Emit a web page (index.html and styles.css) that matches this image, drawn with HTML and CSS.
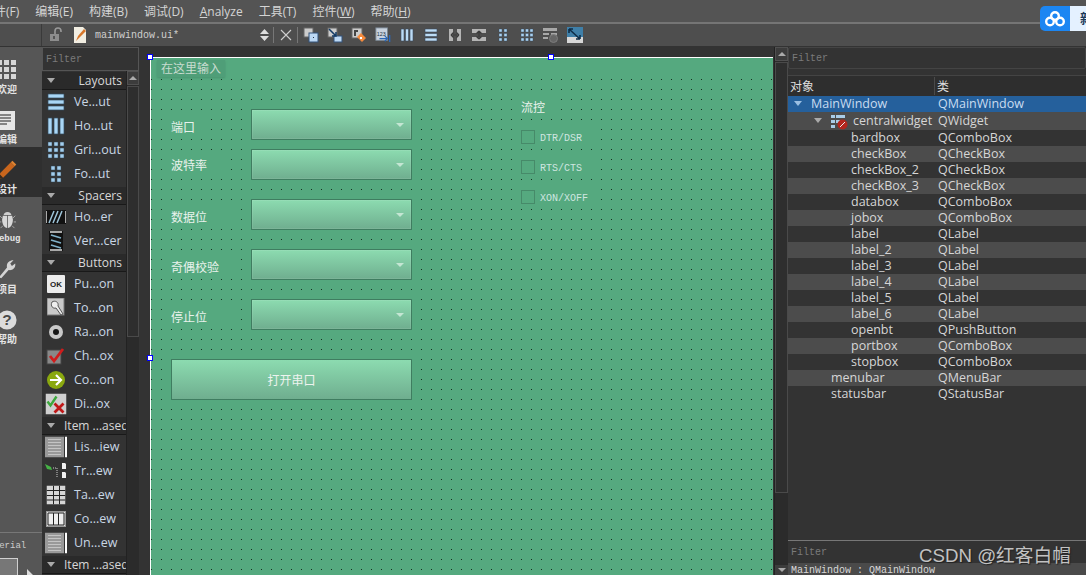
FILE: index.html
```html
<!DOCTYPE html>
<html lang="zh">
<head>
<meta charset="utf-8">
<title>Qt Designer</title>
<link rel="stylesheet" href="styles.css">
</head>
<body>
<div class="app">
  <nav class="menubar">
    <span>件(F)</span><span>编辑(E)</span><span>构建(B)</span><span>调试(D)</span><span><u>A</u>nalyze</span><span>工具(T)</span><span>控件(<u>W</u>)</span><span>帮助(<u>H</u>)</span>
  </nav>
  <div class="toolbar">
    <div class="tb-left"></div>
    <div class="tb-doc">
      <svg class="lock" width="14" height="16" viewBox="0 0 14 16"><path d="M6 7V4a3 3 0 0 1 6 0v1" fill="none" stroke="#999" stroke-width="1.6"/><rect x="1" y="7" width="9" height="7" fill="#8d8d8d"/><rect x="4" y="9" width="2" height="3" fill="#555"/></svg>
      <svg class="docicon" width="16" height="18" viewBox="0 0 16 18"><path d="M2 1h9l3 3v13H2z" fill="#f2eee2"/><path d="M4 15l2-5 6-7 2 2-7 7z" fill="#d8772a"/></svg>
      <span class="docname">mainwindow.ui*</span>
      <svg class="updown" width="9" height="12" viewBox="0 0 9 12"><path d="M4.500 0 9 5H0zM0 7h9l-4.500 5z" fill="#ddd"/></svg>
      <i class="tb-sep"></i>
      <svg class="close" width="12" height="12" viewBox="0 0 12 12"><path d="M1 1l10 10M11 1 1 11" stroke="#d0d0d0" stroke-width="1.100"/></svg>
      <i class="tb-sep"></i>
      <div class="tools">
        <svg width="16" height="16" viewBox="0 0 16 16"><rect x="1" y="1" width="9" height="9" fill="#ccc" stroke="#666"/><rect x="6" y="6" width="9" height="9" fill="#bcd8f4" stroke="#33527a"/><rect x="10" y="10" width="1" height="1" fill="#234"/></svg>
        <svg width="16" height="16" viewBox="0 0 16 16"><rect x="1" y="1" width="9" height="9" fill="#ccc" stroke="#666"/><rect x="7" y="9" width="8" height="6" fill="#bcd8f4" stroke="#33527a"/><path d="M2 2l7 7M9 5v4H5" stroke="#123a66" stroke-width="1.500" fill="none"/></svg>
        <svg width="16" height="16" viewBox="0 0 16 16"><rect x="1" y="1" width="10" height="10" fill="#ccc" stroke="#666"/><path d="M3 3h4v2H5v4H3z" fill="#444"/><path d="M6 10l4-4 5 5-4 4z" fill="#f58a3c"/><rect x="9" y="10" width="2" height="2" fill="#fff"/></svg>
        <svg viewBox="0 0 18 16"><rect x="1" y="0" width="13" height="14" fill="#c8d2de" stroke="#7a8794"/><text x="2" y="9" class="svg-num">123</text><path d="M5 12h9M11 9l3 3-3 3" stroke="#2a67b8" fill="none" stroke-width="1.300"/><path d="M16.500 8v8" stroke="#2a67b8" stroke-width="1.500"/></svg>
        <svg viewBox="0 0 16 16"><path d="M2 2h3v12H2zM6.500 2h3v12h-3zM11 2h3v12h-3z" fill="#bcdcf5" stroke="#3a4c5e" stroke-width=".6"/></svg>
        <svg viewBox="0 0 16 16"><path d="M2 2h12v3H2zM2 6.500h12v3H2zM2 11h12v3H2z" fill="#bcdcf5" stroke="#3a4c5e" stroke-width=".6"/></svg>
        <svg viewBox="0 0 16 16"><path d="M2 2h4v12H2zM10 2h4v12h-4z" fill="#b4b4b4"/><path d="M4 8h8M4 8l2.500-2.500M4 8l2.500 2.500M12 8 9.500 5.500M12 8l-2.500 2.500" stroke="#3a3a3a" fill="none" stroke-width="1.200"/></svg>
        <svg viewBox="0 0 16 16"><path d="M1 2h14v4H1zM1 10h14v4H1z" fill="#b4b4b4"/><path d="M8 4v8M8 4 5.500 6.500M8 4l2.500 2.500M8 12 5.500 9.500M8 12l2.500-2.500" stroke="#3a3a3a" fill="none" stroke-width="1.200"/></svg>
        <svg viewBox="0 0 16 16"><path d="M4 2h3v3H4zM9 2h3v3H9zM4 6.500h3v3H4zM9 6.500h3v3H9zM4 11h3v3H4zM9 11h3v3H9z" fill="#a9d0ef" stroke="#34485a" stroke-width=".4"/></svg>
        <svg viewBox="0 0 16 16"><path d="M2 2h3v3H2zM6.500 2h3v3h-3zM11 2h3v3h-3zM2 6.500h3v3H2zM6.500 6.500h3v3h-3zM11 6.500h3v3h-3zM2 11h3v3H2zM6.500 11h3v3h-3zM11 11h3v3h-3z" fill="#a9d0ef" stroke="#34485a" stroke-width=".4"/></svg>
        <svg viewBox="0 0 16 16"><path d="M0 1h14v3H0zM0 6h6v2H0zM8 6h6v2H8zM0 10h5v2H0z" fill="#a8a8a8"/><circle cx="10.500" cy="11.500" r="4" fill="#666" stroke="#7d7d7d"/></svg>
        <svg viewBox="0 0 16 16"><rect width="16" height="16" fill="#3f7fa8"/><rect y="10" width="16" height="6" fill="#d8d8d8"/><path d="M2 2l11 10M2 2h4M2 2v4M13 12H9M13 12V8" stroke="#0d2d48" stroke-width="1.600" fill="none"/></svg>
      </div>
    </div>
  </div>
  <div class="main">
    <aside class="modes">
      <div class="mode-col">
        <div class="mode">
          <svg width="20" height="20" viewBox="0 0 20 20"><path d="M0 0h5v5H0zM7 0h5v5H7zM14 0h5v5h-5zM0 7h5v5H0zM7 7h5v5H7zM14 7h5v5h-5zM0 14h5v5H0zM7 14h5v5H7zM14 14h5v5h-5z" fill="#d6d6d6"/></svg>
          <span>欢迎</span>
        </div>
        <div class="mode">
          <svg width="30" height="19" viewBox="0 0 30 19"><rect x="0" y="0" width="23" height="19" fill="#e6e6e6"/><path d="M4 4h15M4 7h15M4 10h15M4 13h11" stroke="#222"/></svg>
          <span>编辑</span>
        </div>
        <div class="mode active">
          <svg width="20" height="20" viewBox="0 0 26 26"><path d="M1 25l2-7L18 3l5 5L8 23z" fill="#c9661d"/><path d="M1 25l2-7 5 5z" fill="#3a2a1c"/><path d="M18 3l2-2 5 5-2 2z" fill="#e08532"/></svg>
          <span>设计</span>
        </div>
        <div class="mode">
          <svg width="17" height="20" viewBox="0 0 22 21"><path d="M11 0c3 0 5 2 5 4H6c0-2 2-4 5-4z" fill="#cfcfcf"/><path d="M5 5h5.500v16C7 21 4 16 4 10zM11.500 5H17l1 5c0 6-3 11-6.500 11z" fill="#d8d8d8"/><path d="M4 8 1 5M18 8l3-3M3 13H0M19 13h3M5 18l-3 3M17 18l3 3" stroke="#bbb"/></svg>
          <span class="mode-debug">Debug</span>
        </div>
        <div class="mode">
          <svg width="18" height="24" viewBox="0 0 22 25"><path d="M1 24l10-12c-1-5 2-9 8-9l-4 4 2 3 4-3c1 5-3 9-8 8L4 25z" fill="#d4d4d4"/></svg>
          <span>项目</span>
        </div>
        <div class="mode">
          <svg width="20" height="20" viewBox="0 0 22 22"><circle cx="11" cy="11" r="10.500" fill="#dcdcdc"/><text x="11" y="17" class="svg-help">?</text></svg>
          <span>帮助</span>
        </div>
      </div>
      <div class="mode-foot">
        <span class="mode-kit">Material</span>
        <div class="kit-box"></div>
        <svg class="cursor" width="6" height="8" viewBox="0 0 6 8"><path d="M0 0l6 6H3v2H0z" fill="#ddd"/></svg>
      </div>
    </aside>
    <section class="toolbox">
      <div class="filter">Filter</div>
      <div class="toolbody">
        <div class="toollist">
          <div class="group-h"><i class="caret"></i><b>Layouts</b></div>
          <div class="tool"><svg width="18" height="18" viewBox="0 0 18 18"><path d="M1 1h16v4H1zM1 7h16v4H1zM1 13h16v4H1z" fill="#a9d6f5" stroke="#324a5e" stroke-width=".7"/></svg><span>Ve...ut</span></div>
          <div class="tool"><svg width="18" height="18" viewBox="0 0 18 18"><path d="M1 1h4v16H1zM7 1h4v16H7zM13 1h4v16h-4z" fill="#a9d6f5" stroke="#324a5e" stroke-width=".7"/></svg><span>Ho...ut</span></div>
          <div class="tool"><svg width="18" height="18" viewBox="0 0 18 18"><path d="M1 1h4v4H1zM7 1h4v4H7zM13 1h4v4h-4zM1 7h4v4H1zM7 7h4v4H7zM13 7h4v4h-4zM1 13h4v4H1zM7 13h4v4H7zM13 13h4v4h-4z" fill="#a2cdec" stroke="#2d4050" stroke-width=".5"/></svg><span>Gri...out</span></div>
          <div class="tool"><svg width="18" height="18" viewBox="0 0 18 18"><path d="M4 1h4v4H4zM10 1h4v4h-4zM4 7h4v4H4zM10 7h4v4h-4zM4 13h4v4H4zM10 13h4v4h-4z" fill="#a2cdec" stroke="#2d4050" stroke-width=".5"/></svg><span>Fo...ut</span></div>
          <div class="group-h"><i class="caret"></i><b>Spacers</b></div>
          <div class="tool"><svg width="20" height="14" viewBox="0 0 20 14"><rect width="20" height="14" fill="#111"/><path d="M0 1v12M20 1v12" stroke="#aaa" stroke-width="2"/><path d="M3 13l5-12M7 13l5-12M11 13l5-12" stroke="#9cc3d8" stroke-width="1.500"/></svg><span>Ho...er</span></div>
          <div class="tool"><svg width="14" height="20" viewBox="0 0 14 20"><rect width="14" height="20" fill="#111"/><path d="M1 1h12M1 19h12" stroke="#aaa" stroke-width="2"/><path d="M2 4l10 3M2 9l10 3M2 14l10 3" stroke="#7fb0c8" stroke-width="1.800"/></svg><span>Ver...cer</span></div>
          <div class="group-h"><i class="caret"></i><b>Buttons</b></div>
          <div class="tool"><svg width="18" height="18" viewBox="0 0 18 18"><rect width="18" height="18" rx="1" fill="#ececec"/><text x="9" y="12" class="svg-ok">OK</text></svg><span>Pu...on</span></div>
          <div class="tool"><svg width="18" height="20" viewBox="0 0 18 20"><rect width="17" height="17" fill="#c9c9c9" stroke="#777"/><path d="M5 4c3-2 7 0 6 4l5 8-2 1-5-7C6 11 3 8 5 4z" fill="#eee" stroke="#555"/></svg><span>To...on</span></div>
          <div class="tool"><svg width="16" height="16" viewBox="0 0 16 16"><circle cx="8" cy="8" r="7" fill="#c8c8c8"/><circle cx="8" cy="8" r="3" fill="#151515"/></svg><span>Ra...on</span></div>
          <div class="tool"><svg width="20" height="18" viewBox="0 0 20 18"><rect x="1" y="3" width="14" height="14" fill="#888" stroke="#444"/><path d="M4 9l4 5 9-12" stroke="#d01c1c" stroke-width="2.800" fill="none"/></svg><span>Ch...ox</span></div>
          <div class="tool"><svg width="18" height="18" viewBox="0 0 18 18"><circle cx="9" cy="9" r="9" fill="#8aa80f"/><path d="M3 9h11M9 4l5 5-5 5" stroke="#fff" stroke-width="2.200" fill="none"/></svg><span>Co...on</span></div>
          <div class="tool"><svg width="21" height="21" viewBox="0 0 21 21"><rect width="21" height="21" fill="#cfcfcf"/><path d="M2 8l3 4 6-9" stroke="#3ca83c" stroke-width="2.400" fill="none"/><path d="M9 10l9 9M18 10l-9 9" stroke="#c01818" stroke-width="2.800"/></svg><span>Di...ox</span></div>
          <div class="group-h narrow"><i class="caret"></i><b>Item ...ased</b></div>
          <div class="tool"><svg width="22" height="21" viewBox="0 0 22 21"><rect width="19" height="21" fill="#999"/><path d="M3 3h13M3 6h13M3 9h13M3 12h13M3 15h13M3 18h13" stroke="#c4c4c4"/><rect x="20" width="2" height="21" fill="#fff"/></svg><span>Lis...iew</span></div>
          <div class="tool"><svg width="22" height="16" viewBox="0 0 22 16"><path d="M0 1l6 3 1 3-5-1z" fill="#46b346"/><path d="M8 5h4v9" stroke="#ccc" stroke-dasharray="1 1" fill="none"/><path d="M17 0h3l1 1v5h-4zM17 9h3l1 1v5h-4z" fill="#f2f2f2"/></svg><span>Tr...ew</span></div>
          <div class="tool"><svg width="19" height="19" viewBox="0 0 19 19"><rect width="19" height="19" fill="#d6d6d6"/><path d="M0 5h19M0 10h19M0 14.500h19M7 0v19M13 0v19" stroke="#222"/></svg><span>Ta...ew</span></div>
          <div class="tool"><svg width="20" height="16" viewBox="0 0 20 16"><rect x=".5" y=".5" width="19" height="15" fill="#ddd" stroke="#999"/><path d="M2 2h16v12H2z" fill="#eee" stroke="#222"/><path d="M7.500 2v12M12.500 2v12" stroke="#222"/></svg><span>Co...ew</span></div>
          <div class="tool"><svg width="22" height="21" viewBox="0 0 22 21"><rect width="19" height="21" fill="#999"/><path d="M3 3h13M3 6h13M3 9h13M3 12h13M3 15h13M3 18h13" stroke="#c4c4c4"/><rect x="20" width="2" height="21" fill="#fff"/></svg><span>Un...ew</span></div>
          <div class="group-h narrow"><i class="caret"></i><b>Item ...ased</b></div>
        </div>
        <div class="scroll-left">
          <div class="arrow-up"><i></i></div>
          <div class="thumb"></div>
        </div>
      </div>
    </section>
    <section class="canvas">
      <div class="form">
        <div class="form-menu"><span>在这里输入</span></div>
        <label class="flabel l-port">端口</label>
        <label class="flabel l-baud">波特率</label>
        <label class="flabel l-data">数据位</label>
        <label class="flabel l-parity">奇偶校验</label>
        <label class="flabel l-stop">停止位</label>
        <div class="combo c-port"><i></i></div>
        <div class="combo c-baud"><i></i></div>
        <div class="combo c-data"><i></i></div>
        <div class="combo c-parity"><i></i></div>
        <div class="combo c-stop"><i></i></div>
        <button class="openbt">打开串口</button>
        <label class="flabel l-flow">流控</label>
        <div class="check k-dtr"><i></i><span>DTR/DSR</span></div>
        <div class="check k-rts"><i></i><span>RTS/CTS</span></div>
        <div class="check k-xon"><i></i><span>XON/XOFF</span></div>
        <i class="handle h-tl"></i><i class="handle h-tm"></i><i class="handle h-ml"></i>
      </div>
    </section>
    <div class="scroll-right">
      <div class="arrow-up"><i></i></div>
      <div class="thumb"></div>
      <div class="arrow-down"><i></i></div>
    </div>
    <section class="objects">
      <div class="filter obj-filter">Filter</div>
      <div class="tree-head"><span>对象</span><span>类</span></div>
      <div class="tree">
        <div class="row sel"><span class="name d0"><i class="caret blue"></i>MainWindow</span><span>QMainWindow</span></div>
        <div class="row alt tall"><span class="name d1"><i class="caret"></i><svg width="17" height="16" viewBox="0 0 17 16"><path d="M0 1h4v3H0zM5 1h9v3H5zM0 6h4v3H0zM5 6h4v3H5zM0 11h4v3H0z" fill="#a9cde8"/><circle cx="11.500" cy="10.500" r="5" fill="#b3261e"/><path d="M9 13l5-5" stroke="#eee"/></svg>centralwidget</span><span>QWidget</span></div>
        <div class="row"><span class="name d2">bardbox</span><span>QComboBox</span></div>
        <div class="row alt"><span class="name d2">checkBox</span><span>QCheckBox</span></div>
        <div class="row"><span class="name d2">checkBox_2</span><span>QCheckBox</span></div>
        <div class="row alt"><span class="name d2">checkBox_3</span><span>QCheckBox</span></div>
        <div class="row"><span class="name d2">databox</span><span>QComboBox</span></div>
        <div class="row alt"><span class="name d2">jobox</span><span>QComboBox</span></div>
        <div class="row"><span class="name d2">label</span><span>QLabel</span></div>
        <div class="row alt"><span class="name d2">label_2</span><span>QLabel</span></div>
        <div class="row"><span class="name d2">label_3</span><span>QLabel</span></div>
        <div class="row alt"><span class="name d2">label_4</span><span>QLabel</span></div>
        <div class="row"><span class="name d2">label_5</span><span>QLabel</span></div>
        <div class="row alt"><span class="name d2">label_6</span><span>QLabel</span></div>
        <div class="row"><span class="name d2">openbt</span><span>QPushButton</span></div>
        <div class="row alt"><span class="name d2">portbox</span><span>QComboBox</span></div>
        <div class="row"><span class="name d2">stopbox</span><span>QComboBox</span></div>
        <div class="row alt"><span class="name d3">menubar</span><span>QMenuBar</span></div>
        <div class="row"><span class="name d3">statusbar</span><span>QStatusBar</span></div>
      </div>
      <div class="filter prop-filter">Filter</div>
      <div class="prop-title">MainWindow : QMainWindow</div>
    </section>
  </div>
  <div class="cloud">
    <div class="cloud-icon"><svg width="20" height="16" viewBox="0 0 20 16"><g fill="none" stroke="#fff" stroke-width="2.400"><circle cx="10" cy="5" r="3.800"/><circle cx="5" cy="10.500" r="3.800"/><circle cx="15" cy="10.500" r="3.800"/></g></svg></div>
    <div class="cloud-text">新</div>
  </div>
  <div class="watermark">CSDN @红客白帽</div>
</div>
</body>
</html>
```
FILE: styles.css
```css
* { box-sizing: border-box; }
html, body { margin: 0; height: 100%; overflow: hidden; background: #333; }
body { font-family: "Open Sans", "Noto Sans CJK SC", sans-serif; font-size: 12px; color: #d8d8d8; }
i { display: block; }

.app { position: relative; width: 1086px; height: 575px; display: flex; flex-direction: column; overflow: hidden; }

.menubar { height: 24px; flex: none; display: flex; align-items: center; gap: 16px; margin-left: -6px; background: #545454; border-bottom: 2px solid #757575; color: #d4d4d4; font-size: 12px; }
.menubar span { white-space: nowrap; }

.toolbar { height: 23px; flex: none; display: flex; background: #4e4e4e; border-bottom: 1px solid #333; }
.tb-left { width: 42px; border-right: 1px solid #3a3a3a; }
.tb-doc { flex: 1; display: flex; align-items: center; }
.lock { margin-left: 7px; }
.docicon { margin-left: 9px; }
.docname { margin-left: 7px; width: 165px; font-family: "Liberation Mono", monospace; font-size: 10px; color: #cfcfcf; }
.tb-sep { width: 1px; height: 16px; background: #777; }
.updown + .tb-sep { margin-left: 4px; }
.close { margin: 0 5px 0 6px; }
.tools { display: flex; align-items: center; margin-left: 5px; }
.tools svg { width: 16px; height: 16px; margin-right: 8px; }
.svg-num { font: 6px "Liberation Sans", sans-serif; fill: #234; }
.svg-help { font: bold 17px "Liberation Sans", sans-serif; fill: #4a4a4a; text-anchor: middle; }
.svg-ok { font: bold 8px "Liberation Sans", sans-serif; fill: #222; text-anchor: middle; }

.main { flex: 1; min-height: 0; display: flex; }

.modes { width: 42px; flex: none; display: flex; flex-direction: column; justify-content: space-between; background: #565656; overflow: hidden; }
.mode-col { display: flex; flex-direction: column; }
.mode { width: 42px; height: 50px; padding-right: 28px; display: flex; flex-direction: column; align-items: center; justify-content: flex-end; gap: 3px; color: #e4e4e4; font-size: 10px; font-weight: 700; }
.mode svg, .mode span { flex: none; white-space: nowrap; }
.mode span { line-height: 13px; margin-bottom: 1px; }
.mode .mode-debug { font-family: "Liberation Mono", monospace; font-size: 9px; }
.mode.active { background: #2f2f2f; }
.mode-foot { height: 43px; border-top: 1px solid #777; overflow: hidden; position: relative; }
.mode-kit { display: block; margin: 7px 0 0 -17px; font-family: "Liberation Mono", monospace; font-size: 9px; line-height: 12px; color: #ccc; white-space: nowrap; }
.kit-box { width: 18px; height: 20px; margin: 6px 0 0 0; background: #777; border: 1px solid #d0d0d0; border-left: 0; }
.cursor { position: absolute; left: 27px; top: 36px; }

.toolbox { width: 97px; flex: none; display: flex; flex-direction: column; background: #333; overflow: hidden; }
.filter { height: 24px; flex: none; display: flex; align-items: center; padding-left: 3px; padding-top: 1px; background: #333; border: 1px solid #555; font-family: "Liberation Mono", monospace; font-size: 10px; color: #7a7a7a; }
.toolbody { flex: 1; min-height: 0; display: flex; }
.toollist { width: 84px; flex: none; }
.group-h { position: relative; height: 18px; margin-top: 1px; padding-right: 4px; display: flex; align-items: center; justify-content: flex-end; background: #2a2a2a; border-bottom: 1px solid #191919; font-size: 12px; color: #d8d8d8; }
.group-h b { font-weight: 400; white-space: nowrap; }
.group-h.narrow { justify-content: flex-start; padding-left: 22px; overflow: hidden; }
.caret { width: 0; height: 0; border: 4px solid transparent; border-top: 5px solid #aaa; border-bottom: 0; }
.group-h .caret { position: absolute; left: 5px; top: 6px; }
.tool { width: 84px; height: 24px; display: flex; align-items: center; position: relative; padding-left: 32px; color: #c8d6e4; font-size: 12.500px; white-space: nowrap; }
.tool span { margin-bottom: 2px; }
.tool svg { position: absolute; left: 14px; top: 50%; transform: translate(-50%, -50%); }

.scroll-left { width: 13px; flex: none; background: #2b2b2b; border-left: 1px solid #222; }
.scroll-left .arrow-up, .scroll-right .arrow-up { height: 14px; display: flex; align-items: center; justify-content: center; background: #3c3c3c; border: 1px solid #505050; }
.arrow-up i { width: 0; height: 0; border: 4px solid transparent; border-bottom: 4px solid #aaa; border-top: 0; }
.arrow-down i { width: 0; height: 0; border: 4px solid transparent; border-top: 4px solid #aaa; border-bottom: 0; }
.scroll-left .thumb { height: 251px; margin-top: 1px; background: #2e2e2e; border: 1px solid #4a4a4a; }

.canvas { width: 635px; flex: none; padding: 10px 0 0 11px; background: #333; overflow: hidden; }
.form { position: relative; width: 623px; height: 520px; background-color: #55a97f; background-image: conic-gradient(at 1px 1px, transparent 75%, #16301f 0); background-size: 10px 10px; background-position: 0 21px; border-top: 1px solid #fff; border-left: 1px solid #fff; }
.form-menu { height: 20px; background: #55a97f; }
.form-menu span { display: inline-block; height: 17px; margin-left: 6px; margin-top: 2px; padding: 0 4px; line-height: 17px; background: #4f9e78; box-shadow: 0 1px 2px #4a9370; color: #c9dcd0; font-size: 12px; }
.flabel { position: absolute; left: 20px; height: 20px; width: 64px; background: #55a97f; color: #e9f2ec; font-size: 12px; line-height: 22px; }
.l-port { top: 59px; width: 40px; }
.l-baud { top: 97px; width: 58px; }
.l-data { top: 149px; }
.l-parity { top: 199px; }
.l-stop { top: 249px; }
.l-flow { left: 370px; top: 39px; width: 36px; }
.combo { position: absolute; left: 100px; width: 161px; height: 31px; background: linear-gradient(#8cdbb0, #6fae8f); border: 1px solid #3f7d60; box-shadow: inset 0 0 0 1px rgba(255,255,255,.08); }
.combo i { position: absolute; right: 7px; top: 13px; width: 0; height: 0; border: 4px solid transparent; border-top: 4px solid #c4e6d3; border-bottom: 0; }
.c-port { top: 51px; }
.c-baud { top: 91px; }
.c-data { top: 141px; }
.c-parity { top: 191px; }
.c-stop { top: 241px; }
.openbt { position: absolute; left: 20px; top: 301px; width: 241px; height: 41px; padding: 0; background: linear-gradient(#8cdbb0, #6fae8f); border: 1px solid #3f7d60; color: #edf3ef; font: 12px "Open Sans", "Noto Sans CJK SC", sans-serif; }
.check { position: absolute; left: 370px; width: 80px; height: 20px; display: flex; align-items: center; gap: 5px; background: #55a97f; }
.check i { width: 14px; height: 14px; border: 1px solid #468a69; }
.check span { margin-top: 2px; font-family: "Liberation Mono", monospace; font-size: 10px; color: #cfe6e0; }
.k-dtr { top: 69px; }
.k-rts { top: 99px; }
.k-xon { top: 129px; }
.handle { position: absolute; width: 6px; height: 6px; background: #fff; border: 1px solid #00f; }
.h-tl { left: -4px; top: -4px; }
.h-tm { left: 397px; top: -4px; }
.h-ml { left: -4px; top: 297px; }

.scroll-right { width: 14px; flex: none; position: relative; background: #2b2b2b; border-left: 1px solid #222; }
.scroll-right .thumb { height: 431px; margin-top: 1px; background: #2e2e2e; border: 1px solid #4a4a4a; }
.arrow-down { position: absolute; left: 0; right: 0; bottom: 0; height: 10px; display: flex; align-items: center; justify-content: center; background: #3c3c3c; }

.objects { flex: 1; min-width: 0; display: flex; flex-direction: column; background: #333; }
.obj-filter { height: 22px; border-radius: 2px; border-color: #444; }
.tree-head { height: 21px; margin-top: 6px; flex: none; display: grid; grid-template-columns: 146px 1fr; align-items: center; background: #2e2e2e; border-top: 1px solid #444; color: #ddd; font-size: 12px; }
.tree-head span { padding-left: 2px; }
.tree-head span + span { border-left: 1px solid #4a4a4a; padding-left: 2px; }
.tree { flex: 1; font-size: 12.500px; color: #d6d6d6; }
.row { height: 16px; display: grid; grid-template-columns: 150px 1fr; align-items: center; line-height: 16px; white-space: nowrap; }
.row.tall { height: 18px; }
.row.alt { background: #4c4c4c; }
.row.sel { background: #25609c; color: #c9dcf0; }
.name { display: flex; align-items: center; position: relative; }
.name .caret { position: absolute; top: 5px; }
.name.d0 { padding-left: 23px; }
.name.d0 .caret { left: 6px; }
.name.d1 { padding-left: 65px; }
.name.d1 .caret { left: 26px; }
.name.d1 svg { position: absolute; left: 43px; top: 1px; }
.name.d2 { padding-left: 63px; }
.name.d3 { padding-left: 43px; }
.caret.blue { border-top-color: #9bbfe2; }
.prop-filter { height: 23px; border: 0; border-top: 1px solid #777; }
.prop-title { height: 12px; flex: none; padding-left: 3px; overflow: hidden; background: #4a4a4a; font-family: "Liberation Mono", monospace; font-size: 10px; line-height: 15px; color: #d8d8d8; }

.cloud { position: absolute; left: 1040px; top: 6px; width: 46px; height: 25px; display: flex; border-radius: 5px 0 0 5px; overflow: hidden; background: #1c86f2; }
.cloud-icon { width: 30px; display: flex; align-items: center; justify-content: center; }
.cloud-text { flex: 1; padding-left: 10px; background: #e4f1ff; color: #1c3a5a; font-size: 13px; font-weight: 700; line-height: 25px; white-space: nowrap; overflow: hidden; }

.watermark { position: absolute; left: 919px; top: 544px; font-family: "Liberation Sans", "Noto Sans CJK SC", sans-serif; font-size: 18.700px; line-height: 24px; color: #c2c2c2; text-shadow: 1px 1px 1px #222; white-space: nowrap; }
```
